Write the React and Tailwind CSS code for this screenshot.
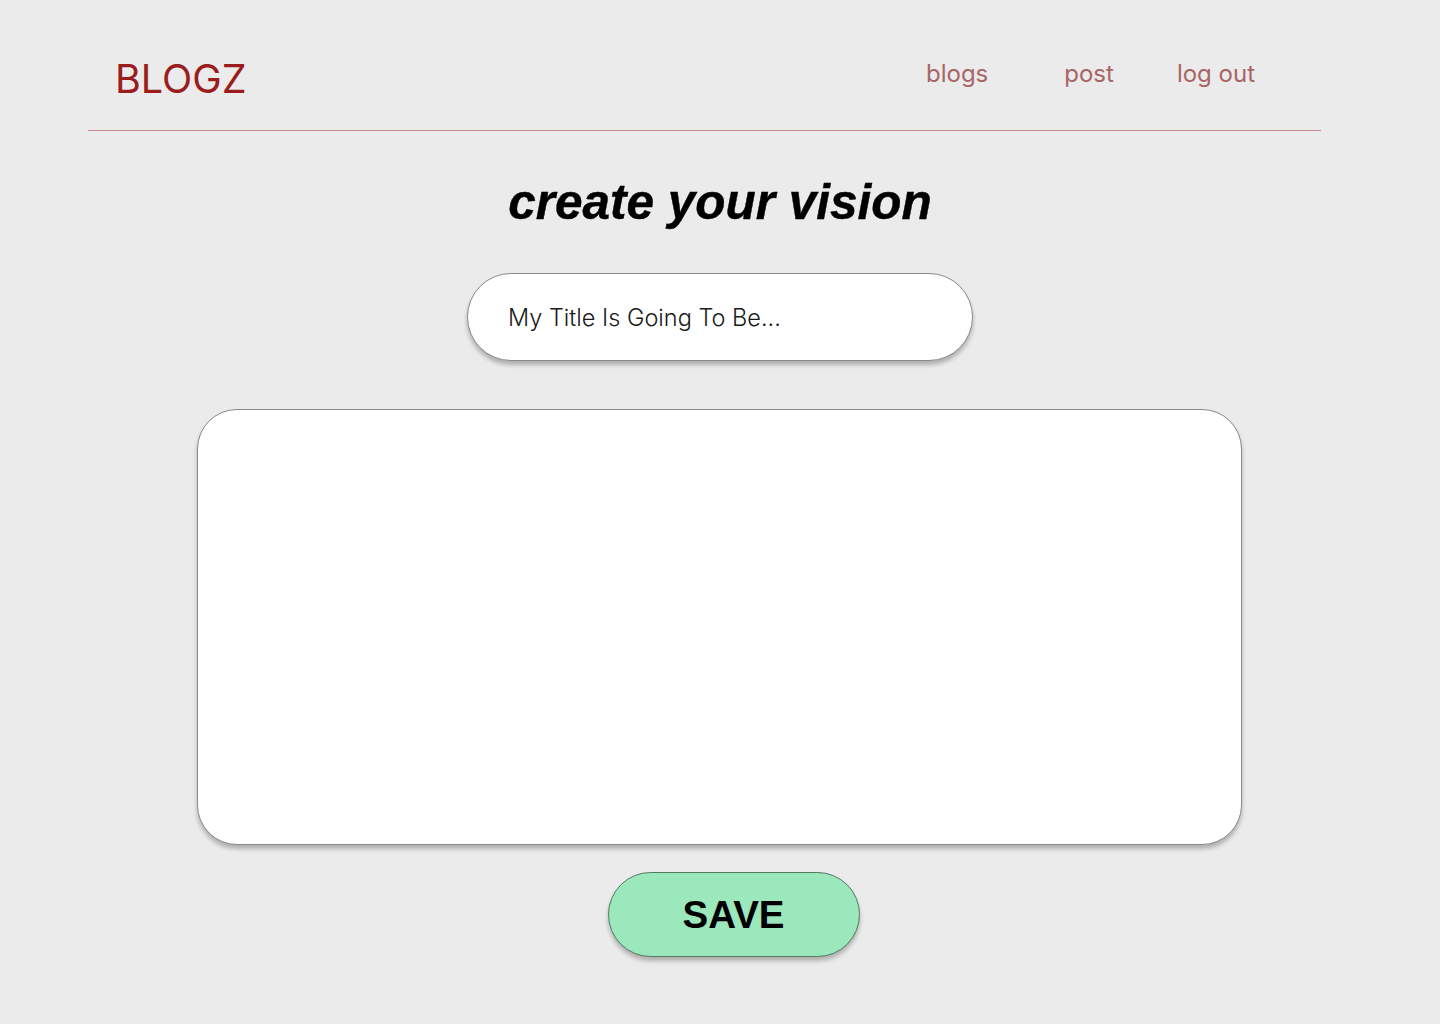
import React from 'react';

const NavLink = ({ children, className = '' }) => (
  <a href="#" className={`text-[24px] leading-none text-[#a86565] ${className}`}>
    {children}
  </a>
);

export default function App() {
  return (
    <div className="min-h-[1024px] w-full bg-[#ebebeb] font-['Inter','Liberation_Sans',sans-serif]">
      {/* Header */}
      <header className="ml-[88px] w-[1233px] flex items-start justify-between pt-[60px] pb-[30px] border-b border-[#c48c8c]">
        <div className="pl-[27px] text-[39.5px] leading-none text-[#9b1c1c]">BLOGZ</div>
        <nav className="flex items-start mt-[2px] pr-[66px]">
          <NavLink>blogs</NavLink>
          <NavLink className="ml-[76px]">post</NavLink>
          <NavLink className="ml-[63px]">log out</NavLink>
        </nav>
      </header>

      {/* Editor */}
      <main className="flex flex-col items-center">
        <h1 className="mt-[46px] font-['Liberation_Sans','Arial',sans-serif] text-[49.5px] leading-none font-bold italic text-black [-webkit-text-stroke:0.4px_black]">
          create your vision
        </h1>

        <input
          type="text"
          placeholder="My Title Is Going To Be..."
          className="mt-[47px] w-[506px] h-[88px] rounded-full bg-white border border-[#8a8a8a] pl-[40px] text-[23.5px] font-light text-[#1a1a1a] placeholder:text-[#1a1a1a] shadow-[0_4px_4px_rgba(0,0,0,0.25)] outline-none"
        />

        <textarea className="mt-[48px] mr-[2px] w-[1045px] h-[436px] rounded-[40px] bg-white border border-[#8a8a8a] shadow-[0_4px_4px_rgba(0,0,0,0.25)] resize-none outline-none p-8 text-[20px]" />

        <button className="mt-[27px] ml-[27px] w-[252px] h-[85px] rounded-full bg-[#9ae8bb] border border-[#537a60] shadow-[0_4px_4px_rgba(0,0,0,0.25)] font-['Liberation_Sans','Arial',sans-serif] text-[38.5px] font-bold text-black leading-none pt-[2px]">
          SAVE
        </button>
      </main>
    </div>
  );
}
